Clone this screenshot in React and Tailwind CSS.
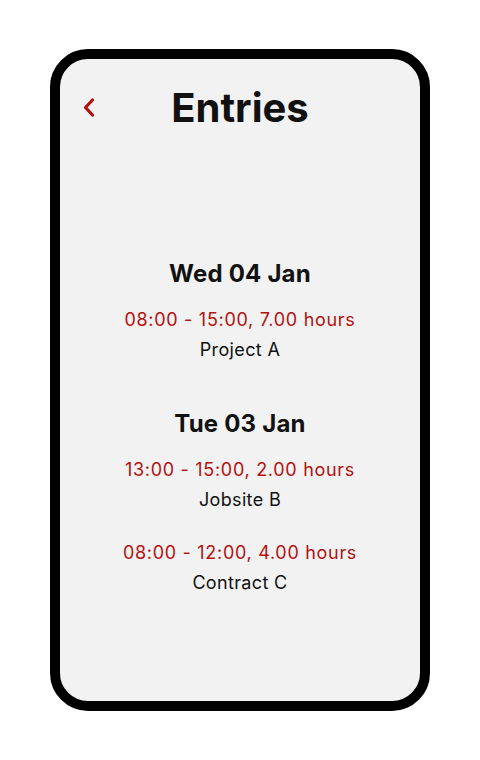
export default function App() {
  const font = { fontFamily: 'Inter, "Noto Sans", sans-serif' };
  return (
    <div className="w-[480px] h-[760px] bg-white flex items-center justify-center" style={font}>
      <div className="w-[380px] h-[662px] border-[10px] border-black rounded-[38px] bg-[#f2f2f2] flex flex-col items-center text-[#111]">
        <div className="relative w-full flex justify-center mt-[25px]">
          <svg className="absolute left-[21px] top-[12px]" width="16" height="24" viewBox="0 0 16 24" fill="none">
            <path d="M11.5 4 L4.5 11.5 L11.5 19" stroke="#b3100f" strokeWidth="3.2" strokeLinecap="round" strokeLinejoin="round" />
          </svg>
          <h1 className="text-[40px] leading-[48px] font-bold">Entries</h1>
        </div>
        <div className="flex flex-col items-center mt-[126px]">
          <h2 className="text-[24px] leading-8 font-bold tracking-[0.2px]">Wed 04 Jan</h2>
          <div className="mt-[15px] flex flex-col items-center text-[18px] leading-[30px]">
            <span className="text-[#b3100f] tracking-[0.7px]">08:00 - 15:00, 7.00 hours</span>
            <span className="tracking-[0.35px]">Project A</span>
          </div>
          <h2 className="mt-[43px] text-[24px] leading-8 font-bold tracking-[0.2px]">Tue 03 Jan</h2>
          <div className="mt-[15px] flex flex-col items-center text-[18px] leading-[30px]">
            <span className="text-[#b3100f] tracking-[0.7px]">13:00 - 15:00, 2.00 hours</span>
            <span className="tracking-[0.35px]">Jobsite B</span>
          </div>
          <div className="mt-[23px] flex flex-col items-center text-[18px] leading-[30px]">
            <span className="text-[#b3100f] tracking-[0.7px]">08:00 - 12:00, 4.00 hours</span>
            <span className="tracking-[0.35px]">Contract C</span>
          </div>
        </div>
      </div>
    </div>
  );
}
